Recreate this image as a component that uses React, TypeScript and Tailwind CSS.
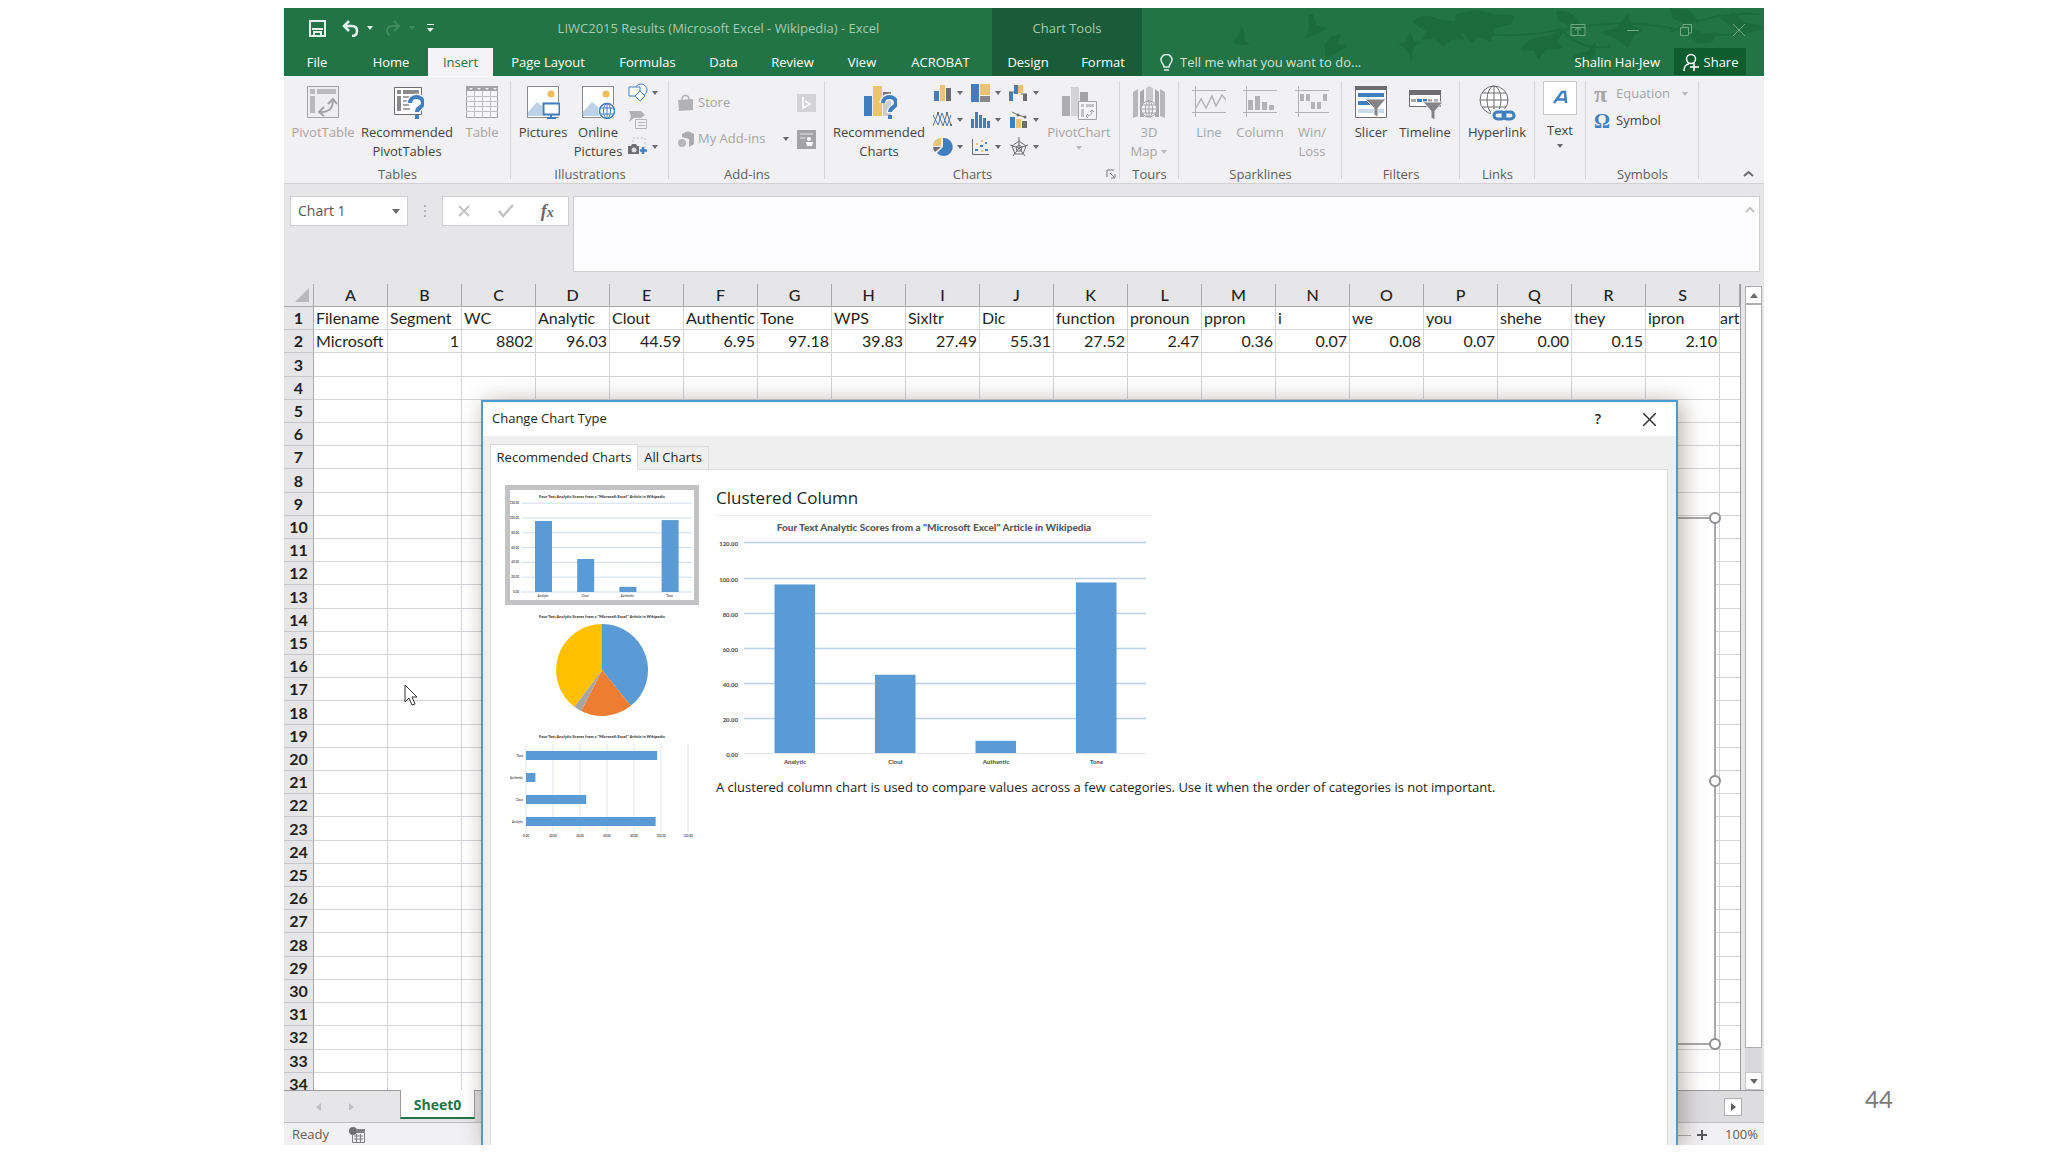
import { useState } from 'react'
import type { ReactNode } from 'react'

const TITLE = 'Four Text Analytic Scores from a "Microsoft Excel" Article in Wikipedia'

const SCORES = [
  { name: 'Analytic', value: 96.03 },
  { name: 'Clout', value: 44.59 },
  { name: 'Authentic', value: 6.95 },
  { name: 'Tone', value: 97.18 },
]

const TICKS = [0, 20, 40, 60, 80, 100, 120]

const COLUMNS = [
  { head: 'Filename', value: 'Microsoft' },
  { head: 'Segment', value: '1' },
  { head: 'WC', value: '8802' },
  { head: 'Analytic', value: '96.03' },
  { head: 'Clout', value: '44.59' },
  { head: 'Authentic', value: '6.95' },
  { head: 'Tone', value: '97.18' },
  { head: 'WPS', value: '39.83' },
  { head: 'Sixltr', value: '27.49' },
  { head: 'Dic', value: '55.31' },
  { head: 'function', value: '27.52' },
  { head: 'pronoun', value: '2.47' },
  { head: 'ppron', value: '0.36' },
  { head: 'i', value: '0.07' },
  { head: 'we', value: '0.08' },
  { head: 'you', value: '0.07' },
  { head: 'shehe', value: '0.00' },
  { head: 'they', value: '0.15' },
  { head: 'ipron', value: '2.10' },
  { head: 'art', value: '' },
]

const TABS = [
  { label: 'File', width: 'w-[66px] mr-1' },
  { label: 'Home', width: 'w-[74px]' },
  { label: 'Insert', width: 'w-[65px]' },
  { label: 'Page Layout', width: 'w-[110px]' },
  { label: 'Formulas', width: 'w-[89px]' },
  { label: 'Data', width: 'w-[63px]' },
  { label: 'Review', width: 'w-[75px]' },
  { label: 'View', width: 'w-[64px]' },
  { label: 'ACROBAT', width: 'w-[93px]' },
]

const GREY = '#a3a2a5'
const DARK = '#6d6d70'
const BLUE = '#3f7fbf'
const GOLD = '#ecc27a'

/* ---------- small pieces ---------- */

function Caret({ dim }: { dim?: boolean }) {
  return (
    <svg width="6" height="4" viewBox="0 0 6 4" className="shrink-0">
      <path d="M0 0h6L3 4z" fill={dim ? '#b9b8bb' : '#6a6a6c'} />
    </svg>
  )
}

function Icon({ size = 34, children }: { size?: number; children: ReactNode }) {
  return (
    <svg width={size} height={size} viewBox={`0 0 ${size} ${size}`} fill="none" className="shrink-0">
      {children}
    </svg>
  )
}

interface GroupProps {
  label: string
  width: string
  inset?: string
  children: ReactNode
  launcher?: boolean
}

function Group({ label, width, inset = '', children, launcher }: GroupProps) {
  return (
    <section className={`${width} shrink-0 flex flex-col justify-between relative`}>
      <div className={`flex ${inset}`}>{children}</div>
      <div className="h-[18px] text-center leading-[18px] text-[#5f5f61]">{label}</div>
      {launcher && (
        <button aria-label="More chart options" className="absolute right-1 bottom-1">
          <Icon size={10}>
            <path d="M1 8V1h7M4 4l4 4M9 5v4H5" stroke="#77777a" />
          </Icon>
        </button>
      )}
      <span className="absolute right-0 top-1 bottom-1 w-px bg-[#d6d5d8]" />
    </section>
  )
}

interface BigButtonProps {
  lines: string[]
  width: string
  icon: ReactNode
  dim?: boolean
  caret?: boolean
}

function BigButton({ lines, width, icon, dim, caret }: BigButtonProps) {
  return (
    <button
      disabled={dim}
      className={`${width} shrink-0 pt-2 flex flex-col items-center leading-[19px] whitespace-nowrap ${dim ? 'text-[#a6a5a8]' : 'text-[#444446]'}`}
    >
      <span className="mb-1">{icon}</span>
      {lines.map((l, i) => (
        <span key={l} className="flex items-center gap-1">
          {l}
          {caret && i > 0 && <Caret dim={dim} />}
        </span>
      ))}
      {caret && lines.length === 1 && <span className="pt-1"><Caret dim={dim} /></span>}
    </button>
  )
}

/* ---------- ribbon icons ---------- */

function PivotTableIcon() {
  return (
    <Icon>
      <path d="M1.500 1.500h31v31h-31z" fill="#eeedef" stroke={GREY} />
      <path d="M4 4h5v5H4zM11 4h19v5H11zM4 11h5v17H4z" fill="#bab9bc" />
      <path d="M13 27c10 1 14-4 14-12M22 19l5-5 4 5M18 22l-5 5 5 4" stroke={GREY} strokeWidth="2" />
    </Icon>
  )
}

function QuestionMark() {
  return (
    <>
      <path d="M20 18c0-8 13-8 13 0 0 5-6 4-6 10" stroke="#f1f0f2" strokeWidth="7" />
      <path d="M20 18c0-8 13-8 13 0 0 5-6 4-6 9" stroke={BLUE} strokeWidth="4" />
      <path d="M25 30h4v4h-4z" fill={BLUE} />
    </>
  )
}

function RecPivotIcon() {
  return (
    <Icon>
      <path d="M4.500 2.500h27v27h-27z" fill="#fff" stroke={DARK} />
      <path d="M7 5h4v4H7zM13 5h16v4H13zM7 11h4v15H7z" fill="#8b8b8e" />
      <path d="M13 12h12M13 16h8M13 20h6M13 24h7" stroke="#a5a5a8" strokeWidth="2" />
      <QuestionMark />
    </Icon>
  )
}

function TableIcon() {
  return (
    <Icon>
      <path d="M1.500 1.500h31v31h-31z" fill="#f6f5f7" stroke={GREY} />
      <path d="M1 1h32v5H1z" fill={GREY} />
      <path d="M1 11.500h32M1 16.500h32M1 21.500h32M1 26.500h32M9.500 6v27M17.500 6v27M25.500 6v27" stroke="#c1c0c3" />
      <path d="M4 3h4l-2 2zM12 3h4l-2 2zM20 3h4l-2 2zM28 3h4l-2 2z" fill="#eee" />
    </Icon>
  )
}

function Photo() {
  return (
    <>
      <path d="M1.500 1.500h31v31h-31z" fill="#fff" stroke="#8a8a8c" />
      <path d="M2 31V27l9-10 7 6v8z" fill="#bcd0e6" />
      <circle cx="25" cy="9" r="3.500" fill="#ebbd5c" />
    </>
  )
}

function PicturesIcon() {
  return (
    <Icon>
      <Photo />
      <path d="M16 17h18v15H16z" fill="#f1f0f2" />
      <path d="M17.500 18.500h16v11h-16z" fill="#fff" stroke={BLUE} strokeWidth="2" />
      <path d="M25 30v3M21 33h9" stroke={BLUE} strokeWidth="2" />
    </Icon>
  )
}

function OnlinePicturesIcon() {
  return (
    <Icon>
      <Photo />
      <circle cx="26" cy="26" r="9" fill="#f1f0f2" />
      <circle cx="26" cy="26" r="7.500" fill="#fff" stroke={BLUE} strokeWidth="1.500" />
      <ellipse cx="26" cy="26" rx="3.500" ry="7.500" stroke={BLUE} />
      <path d="M19 23h14M19 29h14M26 18v16" stroke={BLUE} />
    </Icon>
  )
}

function RecChartsIcon() {
  return (
    <svg width="36" height="34" viewBox="-2 0 36 34" fill="none">
      <path d="M1 11h8v20H1z" fill={BLUE} />
      <path d="M10 1h9v30h-9z" fill="#e9c56f" />
      <path d="M20 7h8v24h-8z" fill="#77777a" />
      <path d="M19 12h14v20H19z" fill="#f1f0f2" opacity="0.700" />
      <QuestionMark />
    </svg>
  )
}

function PivotChartIcon() {
  return (
    <Icon size={36}>
      <path d="M1 11h8v20H1z" fill="#adacaf" />
      <path d="M10 2h8v29h-8z" fill="#d3d2d5" />
      <path d="M19 7h8v12h-8z" fill="#a3a2a5" />
      <path d="M17.500 16.500h18v18h-18z" fill="#f4f3f5" stroke={GREY} />
      <path d="M20 19h3v3h-3zM25 19h8v3h-8zM20 24h3v8h-3z" fill="#c4c3c6" />
      <path d="M25 31c5 0 6-2 6-6M29 27l2-2 2 2M27 29l-2 2 2 2" stroke={GREY} />
    </Icon>
  )
}

function MapIcon() {
  return (
    <Icon>
      <path d="M1 7l5-3v27l-5 2zM28 4l5 3v26l-5-2z" fill="#b7b6b9" />
      <path d="M8 7l4-3v28H8zM23 4l4 3v25h-4z" fill="#a9a8ab" />
      <path d="M14 3l3-2 4 2v14h-7z" fill="#c9c8cb" />
      <circle cx="17" cy="24" r="8" fill="#f4f3f5" stroke={GREY} />
      <ellipse cx="17" cy="24" rx="3.500" ry="8" stroke={GREY} />
      <path d="M9 24h16M10 20h14M10 28h14M17 16v16" stroke={GREY} />
    </Icon>
  )
}

function SparkFrame({ children }: { children: ReactNode }) {
  return (
    <Icon>
      <path d="M0 5.500h34M0 27.500h34M3.500 1v31" stroke="#b3b2b5" />
      {children}
    </Icon>
  )
}

function SlicerIcon() {
  return (
    <Icon>
      <path d="M1.500 1.500h31v31h-31z" fill="#fff" stroke={DARK} />
      <path d="M1 1h32v4H1z" fill={DARK} />
      <path d="M4 8h26v4H4zM4 16h13v4H4z" fill={BLUE} />
      <path d="M4 24h26v4H4z" fill="#c9dbea" />
      <path d="M11 14h21l-8 9v9l-4-2v-7z" fill="#858588" stroke="#f1f0f2" />
    </Icon>
  )
}

function TimelineIcon() {
  return (
    <Icon>
      <path d="M1.500 6.500h31v15h-31z" fill="#fff" stroke={DARK} />
      <path d="M1 5h32v5H1z" fill={DARK} />
      <path d="M3 15.500h5M20 15.500h4M26 15.500h4" stroke="#a9a9ac" strokeWidth="3" />
      <path d="M9 15.500h5M15 15.500h4" stroke={BLUE} strokeWidth="3" />
      <path d="M15 17h20l-8 9v9l-4-2v-7z" fill="#858588" stroke="#f1f0f2" />
    </Icon>
  )
}

function LinkIcon() {
  return (
    <svg width="38" height="36" viewBox="0 0 38 36" fill="none" className="-mb-0.5">
      <circle cx="16" cy="15" r="14" fill="#fff" stroke={DARK} />
      <ellipse cx="16" cy="15" rx="7" ry="14" stroke={DARK} />
      <path d="M2 15h28M4 8h24M4 22h24M16 1v28" stroke={DARK} />
      <path d="M13 24h25v12H13z" fill="#f1f0f2" />
      <rect x="16" y="27" width="11" height="7" rx="3.500" stroke={BLUE} strokeWidth="3" />
      <rect x="25" y="27" width="11" height="7" rx="3.500" stroke={BLUE} strokeWidth="3" />
    </svg>
  )
}

const CHART_MENUS: { name: string; art: ReactNode }[] = [
  {
    name: 'Column chart',
    art: <><path d="M1 8h5v10H1z" fill={BLUE} /><path d="M7 2h5v16H7z" fill={GOLD} /><path d="M13 5h5v13h-5z" fill={DARK} /></>,
  },
  {
    name: 'Hierarchy chart',
    art: <><path d="M0 1h8v18H0z" fill={BLUE} /><path d="M9 1h10v11H9z" fill={GOLD} /><path d="M9 13h10v6H9z" fill="#88888b" /></>,
  },
  {
    name: 'Waterfall chart',
    art: <><path d="M0 9h4v9H0zM5 2h4v9H5z" fill={BLUE} /><path d="M9 2h5v8H9z" fill={GOLD} /><path d="M14 11h4v7h-4z" fill={DARK} /><path d="M0 9h6M12 11h6" stroke={DARK} /></>,
  },
  {
    name: 'Line chart',
    art: <><path d="M0 16L5 3l5 13 4-13 4 12" stroke={DARK} /><path d="M0 5l5 10 4-12 5 13 4-11" stroke={BLUE} /><path d="M4 2h2v2H4zM13 2h2v2h-2zM17 14h2v2h-2z" fill={DARK} /></>,
  },
  {
    name: 'Statistic chart',
    art: <path d="M0 9h3v9H0zM4 2h3v16H4zM8 5h3v13H8zM12 8h3v10h-3zM16 11h3v7h-3z" fill={BLUE} />,
  },
  {
    name: 'Combo chart',
    art: <><path d="M1 7h5v11H1z" fill={BLUE} /><path d="M7 9h5v9H7z" fill={GOLD} /><path d="M13 11h5v7h-5z" fill={DARK} /><path d="M3 2l6 3 7 2" stroke={DARK} /><circle cx="9" cy="5" r="1.500" fill={DARK} /><circle cx="16" cy="7" r="1.500" fill={DARK} /></>,
  },
  {
    name: 'Pie chart',
    art: <><path d="M10 10V1a9 9 0 1 1-6 15z" fill={BLUE} /><path d="M8 9H0a8 8 0 0 1 8-8z" fill={GOLD} /><path d="M8 10L2 15a8 8 0 0 1-2-5z" fill={DARK} /></>,
  },
  {
    name: 'Scatter chart',
    art: <><path d="M1.500 2v15.500H18" stroke={DARK} /><path d="M4 12h3v2H4zM9 8h3v2H9zM14 12h3v2h-3zM14 5h2v2h-2z" fill={BLUE} /><path d="M5 6h2v2H5zM10 3h2v2h-2zM10 13h2v2h-2z" fill={GOLD} /></>,
  },
  {
    name: 'Radar chart',
    art: <><path d="M10 0v11L1 8M10 11l9-3M10 11l6 8M10 11l-6 8" stroke={DARK} /><path d="M10 4l7 5-3 8H6L3 9zM10 8l3 2-1 4H8l-1-4z" stroke={DARK} /></>,
  },
]

/* ---------- window frame ---------- */

function Leaves() {
  return (
    <svg viewBox="0 0 534 62" className="absolute right-0 top-0 w-[534px] h-[62px]" fill="#1b6a3d" opacity="0.800">
      <path d="M2 33q8-2 9-15 5 6 3 14l6 4q-12 4-18-3zM78 8q4-4 6 0l2 9 13 3-10 5-14 6 4-12zM95 36l7-8 9-2-3 10 9 2q-10 8-21 12-2-6-1-14zM168 36l8-3 4-9 4 9 8 2-8 4-3 12-4-10z" />
      <path d="M182 14q12-10 26-3l16 2 12 9-6 3 5 6-14 1-8 7-9-8-12 1 5-8z" />
      <path d="M226 6l20-4 18 4 20 2-2 8-16 4-6 14-12-6-6 8-8-10-10-4z" />
      <path d="M290 42q8-14 28-14l18-8-8 12 4 8-16 2-8 10-4-9zM340 52q6-9 17-8l8-10 1 12-9 8zM326 4q12-4 22 8l8 12-10 6-4-10-14-8z" />
      <path d="M370 24l16-4 12-14 4 12 12 4-10 6-6 12-10-8zM440 0l20 2 8 10-14 4-12-6zM452 26l12-6 10 6 14-2-6 10-14 2-6-6zM490 10l14-6 10 10 18 4-10 6-16-2z" />
      <path d="M200 18q70 16 130 4t110-2q50 14 92 0M330 20q20 24 50 18M440 24q40-20 90-18" fill="none" stroke="#1b6a3d" strokeWidth="2" />
    </svg>
  )
}

function TitleBar() {
  const [tab, setTab] = useState('Insert')
  return (
    <header className="bg-[#227447] text-white relative overflow-hidden">
      <Leaves />
      <div className="relative flex h-10 text-[#a5cab4]">
        <div className="w-[161px] shrink-0 flex items-center pl-[25px] text-white">
          <button aria-label="Save">
            <Icon size={17}>
              <path d="M1 1h15v15H1zM3 9h11M5 16v-4h7v4" stroke="#e6f0ea" strokeWidth="2" />
            </Icon>
          </button>
          <button aria-label="Undo" className="ml-4 flex items-center gap-2">
            <Icon size={17}>
              <path d="M7 1L2 6l5 5M2 6h8q5 0 5 5t-5 5" stroke="#e6f0ea" strokeWidth="2.500" />
            </Icon>
            <svg width="6" height="4" viewBox="0 0 6 4"><path d="M0 0h6L3 4z" fill="#e6f0ea" /></svg>
          </button>
          <button aria-label="Redo" disabled className="ml-3 flex items-center gap-2">
            <Icon size={16}>
              <path d="M9 1l5 5-5 5M14 6H7q-5 0-5 5 0 3 3 4" stroke="#3f8a5f" strokeWidth="2" />
            </Icon>
            <svg width="6" height="4" viewBox="0 0 6 4"><path d="M0 0h6L3 4z" fill="#3f8a5f" /></svg>
          </button>
          <button aria-label="Customize Quick Access Toolbar" className="ml-3">
            <svg width="7" height="8" viewBox="0 0 7 8"><path d="M0 0h7v1H0zM0 4h7L3 8z" fill="#e6f0ea" /></svg>
          </button>
        </div>
        <h1 className="w-[547px] shrink-0 text-center leading-10 whitespace-nowrap">
          LIWC2015 Results (Microsoft Excel - Wikipedia) - Excel
        </h1>
        <div className="w-[150px] shrink-0 bg-[#1a5c38] text-center leading-10">Chart Tools</div>
        <div className="flex-1 flex justify-end items-center gap-[41px] pr-[19px] pt-1">
          <button aria-label="Ribbon Display Options">
            <Icon size={16}><path d="M1 2.500h14v11H1zM1 5.500h14M8 6v7M5 8l3-2 3 2" stroke="#6fa986" /></Icon>
          </button>
          <button aria-label="Minimize">
            <Icon size={12}><path d="M0 6.500h12" stroke="#6fa986" /></Icon>
          </button>
          <button aria-label="Restore">
            <Icon size={12}><path d="M.5 3.500h8v8h-8zM3 3V.500h8.500V9H9" stroke="#6fa986" /></Icon>
          </button>
          <button aria-label="Close">
            <Icon size={12}><path d="M0 0l12 12M12 0L0 12" stroke="#6fa986" /></Icon>
          </button>
        </div>
      </div>
      <nav className="relative flex h-7 leading-7">
        {TABS.map((t) => (
          <button
            key={t.label}
            onClick={() => setTab(t.label)}
            className={`${t.width} shrink-0 whitespace-nowrap ${tab === t.label ? 'bg-[#f4f3f5] text-[#227447]' : ''}`}
          >
            {t.label}
          </button>
        ))}
        <div className="ml-[5px] w-[150px] shrink-0 flex bg-[#1a5c38]">
          <button className="w-[72px]">Design</button>
          <button className="w-[78px]">Format</button>
        </div>
        <label className="ml-4 flex items-center gap-[5px]">
          <Icon size={17}>
            <path d="M6 13c0-3-3-4-3-7a5 5 0 0 1 11 0c0 3-3 4-3 7zM6 16h5" stroke="#dcebe2" strokeWidth="1.500" />
          </Icon>
          <input
            aria-label="Tell me what you want to do"
            placeholder="Tell me what you want to do..."
            className="w-[200px] bg-transparent outline-none placeholder:text-[#cfe3d7]"
          />
        </label>
        <div className="flex-1 flex justify-end pr-[18px]">
          <span className="mr-[14px]">Shalin Hai-Jew</span>
          <button className="w-[72px] h-[27px] bg-[#0f5c2e] flex items-center justify-center gap-1">
            <Icon size={18}>
              <circle cx="9" cy="6" r="4.500" stroke="#fff" strokeWidth="1.500" />
              <path d="M2 18c0-4 2-7 5-7M12 9v9M8 14h9" stroke="#fff" strokeWidth="1.500" />
            </Icon>
            Share
          </button>
        </div>
      </nav>
    </header>
  )
}

function Ribbon() {
  return (
    <div className="flex h-[108px] bg-[#f1f0f2] border-t border-t-[#fafafa] border-b border-b-[#d2d1d4] overflow-hidden">
      <Group label="Tables" width="w-[227px]" inset="pl-[3px]">
        <BigButton lines={['PivotTable']} width="w-[72px]" dim icon={<PivotTableIcon />} />
        <BigButton lines={['Recommended', 'PivotTables']} width="w-24" icon={<RecPivotIcon />} />
        <BigButton lines={['Table']} width="w-[54px]" dim icon={<TableIcon />} />
      </Group>
      <Group label="Illustrations" width="w-[158px]" inset="pl-0.5">
        <BigButton lines={['Pictures']} width="w-[60px]" icon={<PicturesIcon />} />
        <BigButton lines={['Online', 'Pictures']} width="w-[50px]" icon={<OnlinePicturesIcon />} />
        <div className="pt-0.5 pl-[5px] flex flex-col">
          <button aria-label="Shapes" className="h-[27px] flex items-center gap-1">
            <Icon size={20}>
              <circle cx="13" cy="7" r="6" stroke={BLUE} fill="#fff" />
              <path d="M1 4h11v9H1z" stroke={BLUE} fill="#fff" />
              <path d="M12 8l5 5-5 5-5-5z" stroke={BLUE} fill="#fff" />
            </Icon>
            <Caret />
          </button>
          <button aria-label="SmartArt" disabled className="h-[27px] flex items-center">
            <Icon size={20}>
              <path d="M1 1h12l4 4-4 3H6l-5 4 2-6z" fill="#b3b2b5" />
              <path d="M7.500 9.500h11v9h-11zM10 12.500h7M10 15.500h7" stroke="#b3b2b5" fill="#f1f0f2" />
            </Icon>
          </button>
          <button aria-label="Screenshot" className="h-[27px] flex items-center gap-1">
            <Icon size={20}>
              <path d="M5 1h12v12H5z" stroke="#c2c2c5" strokeDasharray="2 2" />
              <path d="M0 9h3l1-2h4l1 2h2v8H0z" fill={DARK} />
              <circle cx="6" cy="13" r="2.500" fill="#ddd" />
              <path d="M15 10v7M12 13.500h7" stroke={BLUE} strokeWidth="2.500" />
            </Icon>
            <Caret />
          </button>
        </div>
      </Group>
      <Group label="Add-ins" width="w-[156px]" inset="pl-2">
        <div className="pt-2 flex flex-col text-[#a6a5a8]">
          <button disabled className="h-9 flex items-center gap-[3px]">
            <Icon size={18}>
              <path d="M1 6l15-1v11l-14 1z" fill="#b3b2b5" />
              <path d="M5 6c0-6 7-6 7 0" stroke="#b3b2b5" strokeWidth="1.500" />
            </Icon>
            Store
          </button>
          <button disabled className="h-9 flex items-center gap-[3px]">
            <Icon size={18}>
              <path d="M5 4l6-3 6 3v10l-5 3V9L5 7z" fill="#aaa9ac" />
              <circle cx="5" cy="13" r="4" fill="#b7b6b9" />
            </Icon>
            <span className="w-[82px] text-left">My Add-ins</span>
            <Caret />
          </button>
        </div>
        <div className="pt-2 ml-2 flex flex-col">
          <button aria-label="Bing Maps" disabled className="h-9">
            <Icon size={19}>
              <path d="M0 0h19v18H0z" fill="#d3d2d5" />
              <path d="M6 3v11l7-4-5-3" stroke="#f8f8f8" strokeWidth="2" />
            </Icon>
          </button>
          <button aria-label="People Graph" disabled className="h-9">
            <Icon size={19}>
              <path d="M0 0h19v19H0z" fill="#a3a2a5" />
              <path d="M3 4h13M3 8h5" stroke="#e5e5e5" />
              <circle cx="12" cy="9" r="2" fill="#fff" />
              <path d="M9 12h7l-1 4h-5z" fill="#fff" />
            </Icon>
          </button>
        </div>
      </Group>
      <Group label="Charts" width="w-[295px]" inset="pl-[6px]" launcher>
        <BigButton lines={['Recommended', 'Charts']} width="w-24" icon={<RecChartsIcon />} />
        <div className="pt-0.5 pl-[6px] grid grid-cols-[38px_38px_38px] auto-rows-[27px]">
          {CHART_MENUS.map((m) => (
            <button key={m.name} aria-label={m.name} className="flex items-center gap-1">
              <Icon size={20}>{m.art}</Icon>
              <Caret />
            </button>
          ))}
        </div>
        <BigButton lines={['PivotChart']} width="w-[64px]" dim caret icon={<span className="block h-[34px]"><PivotChartIcon /></span>} />
      </Group>
      <Group label="Tours" width="w-[59px]">
        <BigButton lines={['3D', 'Map']} width="w-[58px]" dim caret icon={<MapIcon />} />
      </Group>
      <Group label="Sparklines" width="w-[163px]" inset="pl-1">
        <BigButton
          lines={['Line']}
          width="w-[52px]"
          dim
          icon={<SparkFrame><path d="M4 23l5-9 5 9 6-12 4 10 6-11 4 5" stroke="#b3b2b5" strokeWidth="1.500" /></SparkFrame>}
        />
        <BigButton
          lines={['Column']}
          width="w-[50px]"
          dim
          icon={<SparkFrame><path d="M5 15h5v10H5zM12 11h5v14h-5zM19 17h5v8h-5zM26 20h5v5h-5z" fill="#b3b2b5" /></SparkFrame>}
        />
        <BigButton
          lines={['Win/', 'Loss']}
          width="w-[54px]"
          dim
          icon={<SparkFrame><path d="M5 9h4v7H5zM11 9h4v7h-4zM16 17h4v7h-4zM22 17h4v7h-4zM28 9h4v7h-4z" fill="#b3b2b5" /></SparkFrame>}
        />
      </Group>
      <Group label="Filters" width="w-[118px]" inset="pl-1">
        <BigButton lines={['Slicer']} width="w-[50px]" icon={<SlicerIcon />} />
        <BigButton lines={['Timeline']} width="w-[58px]" icon={<TimelineIcon />} />
      </Group>
      <Group label="Links" width="w-[75px]">
        <BigButton lines={['Hyperlink']} width="w-[74px]" icon={<LinkIcon />} />
      </Group>
      <Group label="" width="w-[51px]">
        <button className="w-[50px] pt-1 flex flex-col items-center text-[#444446]">
          <svg width="34" height="34" viewBox="0 0 34 34">
            <path d="M.5.500h33v33H.5z" fill="#fff" stroke="#c8c7ca" />
            <path d="M11 22l8-11h3l1 11M14 18.500h8" stroke={BLUE} strokeWidth="2.500" fill="none" />
          </svg>
          <span className="pt-1.5 pb-1 leading-[19px]">Text</span>
          <Caret />
        </button>
      </Group>
      <Group label="Symbols" width="w-[113px]" inset="pl-2">
        <div className="pt-[3px] flex flex-col text-[#444446]">
          <button disabled className="h-[27px] flex items-center text-[#a6a5a8]">
            <span className="w-[22px] text-left font-['Liberation_Serif',serif] font-bold text-2xl leading-6">π</span>
            <span className="w-[66px] text-left">Equation</span>
            <Caret dim />
          </button>
          <button className="h-[27px] flex items-center">
            <span className="w-[22px] text-left font-['Liberation_Serif',serif] font-bold text-xl leading-5 text-[#3f7fbf]">Ω</span>
            Symbol
          </button>
        </div>
      </Group>
      <div className="flex-1 flex justify-end items-end pr-[10px] pb-1">
        <button aria-label="Collapse the Ribbon">
          <Icon size={11}><path d="M1 8l4.500-4L10 8" stroke="#6a6a6c" strokeWidth="2" /></Icon>
        </button>
      </div>
    </div>
  )
}

function FormulaBar() {
  return (
    <div className="flex items-start h-[100px] pt-3 pl-[6px] pr-1 bg-[#e6e5e7]">
      <div className="w-[118px] h-[30px] shrink-0 flex items-center bg-white border border-[#cfced1] px-[7px]">
        <input aria-label="Name Box" defaultValue="Chart 1" className="w-0 flex-1 outline-none text-sm text-[#555557]" />
        <button aria-label="Open name list">
          <svg width="8" height="5" viewBox="0 0 8 5"><path d="M0 0h8L4 5z" fill="#6a6a6c" /></svg>
        </button>
      </div>
      <div className="w-[34px] h-[30px] shrink-0 flex flex-col items-center justify-center gap-[3px]">
        <span className="size-0.5 bg-[#b0afb2]" />
        <span className="size-0.5 bg-[#b0afb2]" />
        <span className="size-0.5 bg-[#b0afb2]" />
      </div>
      <div className="w-[127px] h-[30px] shrink-0 flex items-center bg-white border border-[#cfced1]">
        <button aria-label="Cancel" className="flex-1 flex justify-center">
          <Icon size={14}><path d="M2 2l10 10M12 2L2 12" stroke="#c3c2c5" strokeWidth="2" /></Icon>
        </button>
        <button aria-label="Enter" className="flex-1 flex justify-center">
          <Icon size={16}><path d="M1 8l4 5L15 2" stroke="#c3c2c5" strokeWidth="2.500" /></Icon>
        </button>
        <button aria-label="Insert Function" className="flex-1 font-['Liberation_Serif',serif] italic font-bold text-lg leading-6 text-[#6a6a6c]">
          f<span className="text-sm">x</span>
        </button>
      </div>
      <div className="ml-1 flex-1 flex items-start h-[76px] bg-[#fdfcfe] border border-[#cfced1]">
        <textarea aria-label="Formula" className="flex-1 h-full resize-none outline-none" />
        <button aria-label="Collapse Formula Bar" className="p-1 pt-2">
          <Icon size={10}><path d="M1 7l4-4 4 4" stroke="#c3c2c5" strokeWidth="2" /></Icon>
        </button>
      </div>
    </div>
  )
}

/* ---------- worksheet ---------- */

function Sheet() {
  const rows = Array.from({ length: 34 }, (_, i) => i + 1)
  return (
    <div className="flex h-[806px] bg-[#e6e5e7]">
      <div className="flex-1 min-w-0 overflow-hidden border-r border-r-[#9b9a9d]">
        <table className="table-fixed w-full h-[812px] border-separate border-spacing-0 bg-white font-[Lato,sans-serif] text-base leading-5 text-[#1f1f21]">
          <colgroup>
            <col className="w-[30px]" />
            {COLUMNS.slice(0, -1).map((c) => <col key={c.head} className="w-[74px]" />)}
            <col />
          </colgroup>
          <thead>
            <tr>
              <th className="h-[23px] p-0 bg-[#e6e5e7] border-r border-b border-[#a9a8ab]">
                <svg width="14" height="14" viewBox="0 0 14 14" className="ml-auto mr-1"><path d="M14 0v14H0z" fill="#b9b8bb" /></svg>
              </th>
              {COLUMNS.map((c, i) => (
                <th key={c.head} className="h-[23px] p-0 bg-[#e6e5e7] border-r border-b border-[#a9a8ab] font-medium">
                  {i < 19 ? String.fromCharCode(65 + i) : ''}
                </th>
              ))}
            </tr>
          </thead>
          <tbody>
            {rows.map((r) => (
              <tr key={r}>
                <th className="p-0 bg-[#e6e5e7] border-r border-r-[#a9a8ab] border-b border-b-[#c6c5c8] font-bold">{r}</th>
                {COLUMNS.map((c, i) => (
                  <td
                    key={c.head}
                    className={`py-0 border-b border-[#d4d3d8] whitespace-nowrap ${i < 19 ? 'px-[2px] border-r' : 'p-0'} ${r === 2 && i > 0 ? 'text-right' : ''}`}
                  >
                    {r === 1 ? c.head : r === 2 ? c.value : ''}
                  </td>
                ))}
              </tr>
            ))}
          </tbody>
        </table>
      </div>
      <div className="w-[23px] shrink-0 pl-1 pr-[2px] pt-0.5 flex flex-col">
        <button aria-label="Scroll up" className="h-[18px] bg-white border border-[#aeadb0] flex items-center justify-center">
          <svg width="8" height="5" viewBox="0 0 8 5"><path d="M0 5h8L4 0z" fill="#6a6a6c" /></svg>
        </button>
        <div className="h-[744px] bg-white border border-[#aeadb0]" />
        <div className="flex-1 bg-[#d8d7da]" />
        <button aria-label="Scroll down" className="h-[18px] bg-white border border-[#c6c5c8] flex items-center justify-center">
          <svg width="8" height="5" viewBox="0 0 8 5"><path d="M0 0h8L4 5z" fill="#6a6a6c" /></svg>
        </button>
      </div>
    </div>
  )
}

function SheetTabs() {
  return (
    <div className="h-[33px] flex items-start bg-[#e6e5e7] border-b border-b-[#bdbcbf]">
      <div className="w-[116px] h-full shrink-0 flex items-center pl-8 gap-7 border-t border-[#9b9a9d]">
        <button aria-label="Previous sheet">
          <svg width="5" height="8" viewBox="0 0 5 8"><path d="M5 0v8L0 4z" fill="#c0bfc2" /></svg>
        </button>
        <button aria-label="Next sheet">
          <svg width="5" height="8" viewBox="0 0 5 8"><path d="M0 0v8l5-4z" fill="#c0bfc2" /></svg>
        </button>
      </div>
      <button className="w-[75px] h-[29px] pt-0.5 shrink-0 bg-white border-x border-x-[#9b9a9d] border-b-2 border-b-[#227447] text-[#227447] font-bold text-sm">
        Sheet0
      </button>
      <div className="flex-1 h-full border-t border-[#9b9a9d] flex items-center bg-[#dddcdf] pr-[22px]">
        <button aria-label="Scroll right" className="ml-auto size-[18px] bg-white border border-[#aeadb0] flex items-center justify-center">
          <svg width="5" height="8" viewBox="0 0 5 8"><path d="M0 0v8l5-4z" fill="#5a5a5c" /></svg>
        </button>
      </div>
    </div>
  )
}

function StatusBar() {
  return (
    <footer className="h-[22px] pt-0.5 flex items-center bg-[#f1f0f2] text-[#5f5f61] pl-2 pr-[6px]">
      <span>Ready</span>
      <button aria-label="Record Macro" className="ml-5">
        <Icon size={16}>
          <path d="M3.500 5.500h12v10h-12zM5 9h9M5 12h9M7.500 7v8M11.500 7v8" stroke="#808083" />
          <path d="M8 2h8v3H8z" fill="#808083" />
          <circle cx="4" cy="4" r="4" fill="#707073" />
        </Icon>
      </button>
      <div className="ml-auto w-24 h-px bg-[#a9a8ab]" />
      <button aria-label="Zoom in" className="ml-1.5 mr-[18px]">
        <Icon size={10}><path d="M5 0v10M0 5h10" stroke="#5a5a5c" strokeWidth="2" /></Icon>
      </button>
      <span>100%</span>
    </footer>
  )
}

/* ---------- charts ---------- */

function ColumnPreview() {
  return (
    <svg width="436" height="254" viewBox="0 0 436 254" className="font-[Lato,sans-serif] font-bold" fill="#58585a">
      <path d="M0 .5h436" stroke="#efeaee" />
      <text x="218" y="16" fontSize="10" fontWeight="900" textAnchor="middle">{TITLE}</text>
      {TICKS.map((t) => {
        const y = Math.round(238 - t * 1.755) + 0.5
        return (
          <g key={t}>
            <path d={`M28 ${y}h402`} stroke={t === 0 ? '#e3e3e8' : '#b9d0e6'} strokeWidth={t === 0 ? 1 : 1.5} />
            <text x="22" y={y + 3} fontSize="6" fontWeight="900" textAnchor="end">{t.toFixed(2)}</text>
          </g>
        )
      })}
      {SCORES.map((s, i) => (
        <g key={s.name}>
          <rect x={58.5 + i * 100.5} y={238 - s.value * 1.755} width="40.500" height={s.value * 1.755} fill="#5b9bd5" />
          <text x={79 + i * 100.5} y="249" fontSize="6" fontWeight="900" textAnchor="middle">{s.name}</text>
        </g>
      ))}
    </svg>
  )
}

function Thumb({ children }: { children: ReactNode }) {
  return (
    <svg width="184" height="110" viewBox="0 0 184 110" className="font-[Lato,sans-serif] font-bold" fill="#58585a">
      <text x="92" y="8" fontSize="4" fontWeight="900" fill="#3a3a3c" textAnchor="middle">{TITLE}</text>
      {children}
    </svg>
  )
}

function ColumnThumb() {
  return (
    <Thumb>
      {TICKS.map((t) => (
        <g key={t}>
          <path d={`M12 ${102 - t * 0.74}h170`} stroke="#cfdeec" />
          <text x="9" y={103 - t * 0.74} fontSize="3" textAnchor="end">{t.toFixed(2)}</text>
        </g>
      ))}
      {SCORES.map((s, i) => (
        <g key={s.name}>
          <rect x={25 + i * 42.2} y={102 - s.value * 0.74} width="17" height={s.value * 0.74} fill="#5b9bd5" />
          <text x={33 + i * 42.2} y="107" fontSize="3" textAnchor="middle">{s.name}</text>
        </g>
      ))}
    </Thumb>
  )
}

function PieThumb() {
  const total = SCORES.reduce((sum, s) => sum + s.value, 0)
  const fills = ['#5b9bd5', '#ed7d31', '#a5a5a5', '#ffc000']
  const point = (share: number) => {
    const a = share * 2 * Math.PI
    return `${92 + 46 * Math.sin(a)} ${60 - 46 * Math.cos(a)}`
  }
  let run = 0
  return (
    <Thumb>
      {SCORES.map((s, i) => {
        const from = run / total
        run += s.value
        return <path key={s.name} d={`M92 60L${point(from)}A46 46 0 0 1 ${point(run / total)}z`} fill={fills[i]} />
      })}
    </Thumb>
  )
}

function BarThumb() {
  return (
    <Thumb>
      {TICKS.map((t) => (
        <g key={t}>
          <path d={`M${16 + t * 1.35} 14v88`} stroke="#dfe4ee" />
          <text x={16 + t * 1.35} y="107" fontSize="3" textAnchor="middle">{t.toFixed(2)}</text>
        </g>
      ))}
      {[...SCORES].reverse().map((s, i) => (
        <g key={s.name}>
          <rect x="16" y={21 + i * 22} width={s.value * 1.35} height="9" fill="#5b9bd5" />
          <text x="13" y={27 + i * 22} fontSize="3" textAnchor="end">{s.name}</text>
        </g>
      ))}
    </Thumb>
  )
}

function ChartDialog() {
  const [picked, setPicked] = useState(0)
  const thumbs = [<ColumnThumb />, <PieThumb />, <BarThumb />]
  return (
    <div
      role="dialog"
      aria-labelledby="dialog-title"
      className="absolute left-[197px] right-[86px] top-[392px] bottom-0 flex flex-col bg-[#f0eff0] border-x-2 border-t-2 border-[#4a9ad4] shadow-[4px_2px_22px_rgba(70,60,50,0.4)] text-[#1f1f21]"
    >
      <div className="h-[34px] shrink-0 flex items-center bg-white pl-[9px] pr-5">
        <h2 id="dialog-title">Change Chart Type</h2>
        <button aria-label="Help" className="ml-auto mr-[42px] font-semibold text-sm">?</button>
        <button aria-label="Close dialog">
          <Icon size={13}><path d="M0 0l13 13M13 0L0 13" stroke="#333335" strokeWidth="1.500" /></Icon>
        </button>
      </div>
      <div className="pt-2 pl-[7px] flex items-end shrink-0">
        <button className="relative z-10 -mb-px w-[148px] h-[26px] bg-white border border-b-0 border-[#dcdbde]">Recommended Charts</button>
        <button className="w-[71px] h-[23px] border border-b-0 border-l-0 border-[#dcdbde]">All Charts</button>
      </div>
      <div className="flex-1 ml-[7px] mr-2 bg-white border border-b-0 border-[#dcdbde] flex items-start pl-[14px] pt-[15px]">
        <div className="w-[194px] shrink-0 flex flex-col">
          {thumbs.map((t, i) => (
            <button
              key={i}
              aria-label={['Clustered Column', 'Pie', 'Clustered Bar'][i]}
              onClick={() => setPicked(i)}
              className={`border-[5px] ${picked === i ? 'border-[#c3c2c5]' : 'border-transparent'}`}
            >
              {t}
            </button>
          ))}
        </div>
        <div className="pl-[17px] flex-1 min-w-0">
          <h3 className="text-[17px] leading-[26px] pb-1">Clustered Column</h3>
          <ColumnPreview />
          <p className="pt-2 leading-5">
            A clustered column chart is used to compare values across a few categories. Use it when the order of categories is not important.
          </p>
        </div>
      </div>
    </div>
  )
}

/* the selected chart that sits behind the dialog */
function ChartFrame() {
  return (
    <div className="absolute right-12 top-[509px] w-[300px] h-[528px] bg-white border-2 border-[#a9a8ab]">
      <span className="absolute -right-[7px] -top-[7px] size-3 rounded-full bg-white border-2 border-[#8f8e91]" />
      <span className="absolute -right-[7px] top-1/2 -mt-1.5 size-3 rounded-full bg-white border-2 border-[#8f8e91]" />
      <span className="absolute -right-[7px] -bottom-[7px] size-3 rounded-full bg-white border-2 border-[#8f8e91]" />
    </div>
  )
}

export default function App() {
  return (
    <div className="min-h-screen bg-white grid grid-cols-[1fr_minmax(0,1480px)_1fr] font-['Open_Sans','Noto_Sans',sans-serif] text-[13px]">
      <main className="col-start-2 mt-2 self-start relative overflow-hidden">
        <TitleBar />
        <Ribbon />
        <FormulaBar />
        <Sheet />
        <SheetTabs />
        <StatusBar />
        <ChartFrame />
        <ChartDialog />
        <svg width="14" height="22" viewBox="0 0 14 22" className="absolute left-[120px] top-[676px]">
          <path d="M1 1v17l4-4 3 7 3-1-3-7h5z" fill="#fff" stroke="#333335" />
        </svg>
      </main>
      <aside className="self-end pl-[101px] pb-[37px] text-2xl leading-8 font-[Lato,sans-serif] text-[#7b7a7d]">44</aside>
    </div>
  )
}
